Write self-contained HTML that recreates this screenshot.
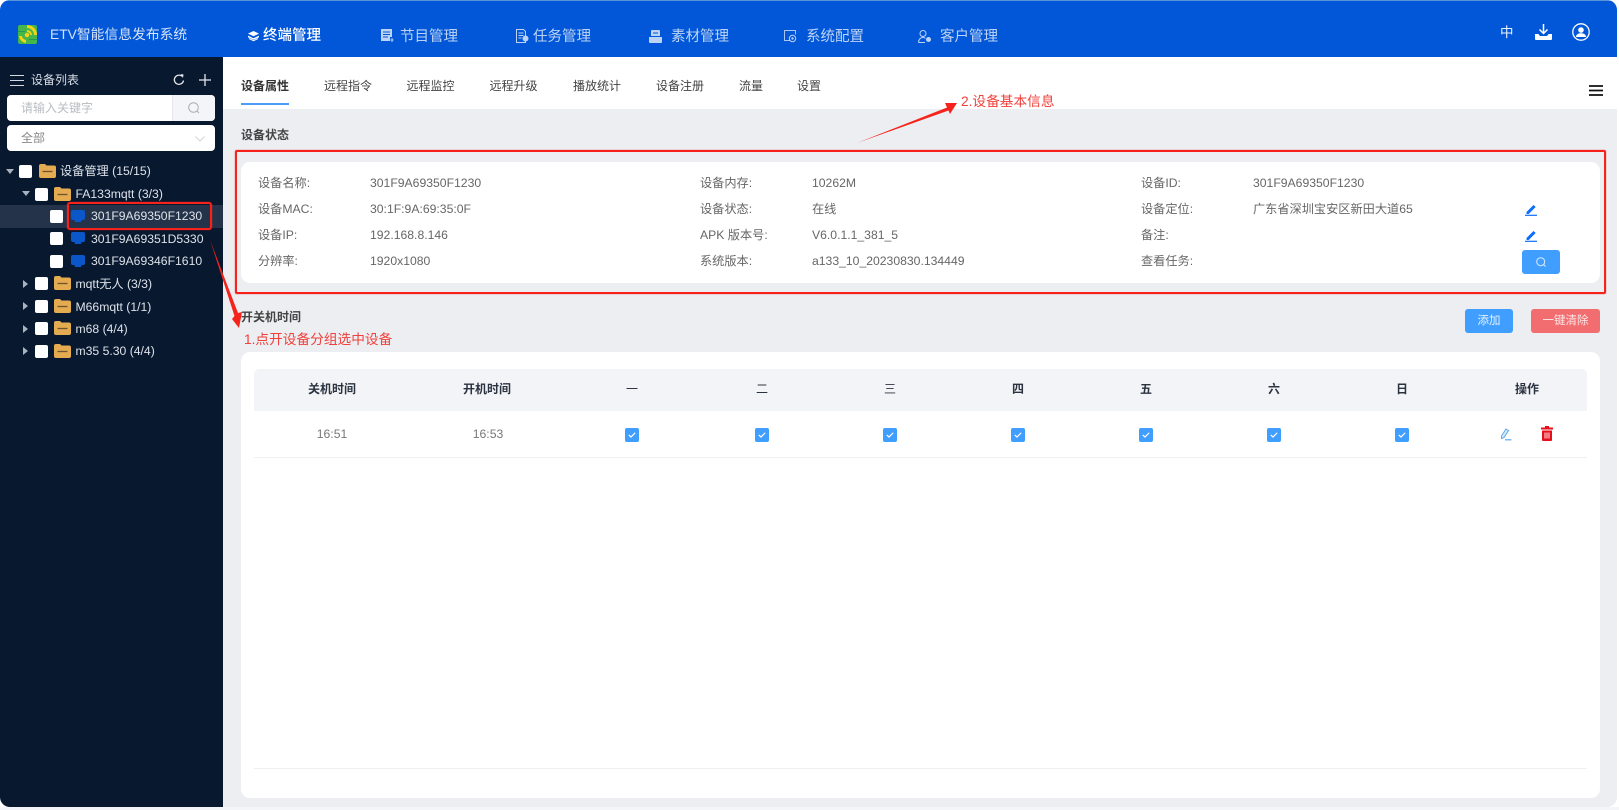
<!DOCTYPE html>
<html lang="zh-CN"><head><meta charset="utf-8"><title>ETV智能信息发布系统</title>
<style>
*{box-sizing:border-box}
html,body{margin:0;padding:0;width:1619px;height:810px;overflow:hidden;background:#fff}
body{position:relative;font-family:"Liberation Sans","Noto Sans CJK SC",sans-serif;font-size:12px;color:#666;filter:blur(.3px)}
.a{position:absolute}
.t{position:absolute;white-space:nowrap;height:20px;line-height:20px}
.n{font-size:14.5px;color:#bcd3f5;top:27px}
.tab{font-size:12px;color:#444;top:76px}
.l{font-size:12.2px;color:#666}
.tree{font-size:12.2px;color:#dde2ea}
.cb{position:absolute;width:13px;height:13px;background:#fff;border-radius:2px}
.th{font-size:12px;font-weight:bold;color:#2b3240;top:379px;transform:translateX(-50%)}
.ck{position:absolute;top:428px;width:14px;height:14px;background:#409eff;border-radius:2px}
svg{position:absolute;overflow:visible}
</style></head><body>

<!-- frame -->
<div class="a" style="left:0;top:0;width:1617px;height:807px;background:#eceef2;border-radius:10px;overflow:hidden">
<div class="a" style="left:0;top:0;width:1617px;height:57px;background:#0257d9;border-top:1px solid #5b93d8"></div>
<div class="a" style="left:0;top:57px;width:223px;height:750px;background:#08182f"></div>
<div class="a" style="left:223px;top:57px;width:1394px;height:52px;background:#fff"></div>
</div>
<div class="a" style="left:0;top:807px;width:1619px;height:3px;background:#f4f5f8"></div>

<!-- logo -->
<svg style="left:18px;top:25px" width="19" height="19" viewBox="0 0 19 19">
<rect x="0" y="0" width="19" height="19" rx="2" fill="#45b649"/>
<path d="M0 6.500h7M0 12.500h5M11 14.500h8" stroke="#1f8f5a" stroke-width=".8"/>
<path d="M9 0a10 10 0 0 1 10 10h-3a7 7 0 0 0-7-7z" fill="#f3d21c"/>
<path d="M9 5a5 5 0 0 1 5 5h-2a3 3 0 0 0-3-3z" fill="#f3d21c"/>
<path d="M1 11a8 8 0 0 0 7 7v-3a5 5 0 0 1-4-4z" fill="#f3d21c"/>
<circle cx="9" cy="10" r="2.200" fill="#f3d21c"/>
</svg>
<div class="t" style="left:50px;top:25px;font-size:13.8px;color:#d5e3f8">ETV智能信息发布系统</div>

<!-- nav -->
<svg style="left:248px;top:31px" width="11" height="10" viewBox="0 0 11 10"><path d="M5.500 0L11 2.600 5.500 5.200 0 2.600z" fill="#fff"/><path d="M0 4.600l5.500 2.600L11 4.600v1.600L5.500 8.800 0 6.200z" fill="#fff"/><path d="M1 7.600l4.500 2.100L10 7.600" stroke="#fff" fill="none"/></svg>
<div class="t n" style="left:263px;top:26px;color:#fff;font-weight:500">终端管理</div>

<svg style="left:381px;top:29px" width="13" height="13" viewBox="0 0 13 13"><path d="M0 0h11v8h-2v4H0z" fill="#bcd3f5"/><path d="M2 3h7M2 5.500h7M2 8h5" stroke="#0257d9" stroke-width=".9"/><path d="M11 9v4M9.500 11h3" stroke="#bcd3f5"/></svg>
<div class="t n" style="left:400px">节目管理</div>

<svg style="left:516px;top:29px" width="13" height="15" viewBox="0 0 13 15"><path d="M.5.500h7l2 2v11h-9z" fill="none" stroke="#bcd3f5"/><path d="M2.500 4h5M2.500 6.500h5M2.500 9h3" stroke="#bcd3f5"/><circle cx="9.500" cy="9.500" r="3" fill="#bcd3f5"/></svg>
<div class="t n" style="left:533px">任务管理</div>

<svg style="left:649px;top:30px" width="13" height="13" viewBox="0 0 13 13"><path d="M3 0h7a1 1 0 0 1 1 1v5H2V1a1 1 0 0 1 1-1z" fill="#bcd3f5"/><path d="M4 3h5" stroke="#0257d9"/><path d="M0 7h13v5a1 1 0 0 1-1 1H1a1 1 0 0 1-1-1z" fill="#bcd3f5"/></svg>
<div class="t n" style="left:671px">素材管理</div>

<svg style="left:784px;top:30px" width="13" height="13" viewBox="0 0 13 13"><path d="M6 10.500H.5V.5h11v4" fill="none" stroke="#a9c6f2"/><circle cx="8.500" cy="8.500" r="3.200" fill="none" stroke="#bcd3f5"/><circle cx="8.500" cy="8.500" r="1.200" fill="#bcd3f5"/></svg>
<div class="t n" style="left:806px">系统配置</div>

<svg style="left:918px;top:30px" width="14" height="13" viewBox="0 0 14 13"><circle cx="5" cy="3.500" r="3" fill="none" stroke="#bcd3f5"/><path d="M.5 12.500c0-3 2-5 4.500-5 1 0 1.800.3 2.500.8M.5 12.500H7" fill="none" stroke="#bcd3f5"/><circle cx="10.500" cy="9.500" r="2.500" fill="#bcd3f5"/></svg>
<div class="t n" style="left:940px">客户管理</div>

<!-- top right -->
<div class="t" style="left:1500px;top:23px;font-size:13.5px;color:#eaf2ff">中</div>
<svg style="left:1535px;top:24px" width="17" height="16" viewBox="0 0 17 16"><path d="M8.500 0v9M4.500 5.500l4 4 4-4" fill="none" stroke="#fff" stroke-width="1.500"/><path d="M0 10h3.500l1.500 2h7l1.500-2H17v5a1 1 0 0 1-1 1H1a1 1 0 0 1-1-1z" fill="#fff"/></svg>
<svg style="left:1572px;top:23px" width="18" height="18" viewBox="0 0 18 18"><circle cx="9" cy="9" r="8.200" fill="none" stroke="#fff" stroke-width="1.300"/><circle cx="9" cy="7" r="2.800" fill="#fff"/><path d="M4 14c0-2.500 2-3.800 5-3.800s5 1.300 5 3.800z" fill="#fff"/></svg>

<!-- sidebar head -->
<svg style="left:10px;top:75px" width="14" height="11" viewBox="0 0 14 11"><path d="M0 .5h14M0 5.500h14M0 10.500h14" stroke="#d5dae2" stroke-width="1"/></svg>
<div class="t" style="left:31px;top:70px;font-size:12px;color:#d8dde5">设备列表</div>
<svg style="left:173px;top:74px" width="12" height="12" viewBox="0 0 12 12"><path d="M10.500 6.500A4.600 4.600 0 1 1 9 2.300" fill="none" stroke="#e3e7ec" stroke-width="1.300"/><path d="M7.500 0l3 .5-.5 3.500z" fill="#e3e7ec"/></svg>
<svg style="left:199px;top:74px" width="12" height="12" viewBox="0 0 12 12"><path d="M6 0v12M0 6h12" stroke="#e3e7ec" stroke-width="1.300"/></svg>

<div class="a" style="left:7px;top:95px;width:208px;height:26px;background:#fff;border-radius:4px;overflow:hidden"><div class="a" style="left:165px;top:0;width:43px;height:26px;background:#f4f5f8;border-left:1px solid #e6e8ec"></div></div>
<div class="t" style="left:21px;top:98px;color:#b9bcc2;font-size:12px">请输入关键字</div>
<svg style="left:188px;top:102px" width="12" height="12" viewBox="0 0 12 12"><circle cx="5.500" cy="5.500" r="4.800" fill="none" stroke="#a8adb5"/><path d="M9 9l2 2" stroke="#a8adb5"/></svg>
<div class="a" style="left:7px;top:125px;width:208px;height:26px;background:#fff;border-radius:4px"></div>
<div class="t" style="left:21px;top:128px;color:#888;font-size:12px">全部</div>
<svg style="left:195px;top:136px" width="10" height="6" viewBox="0 0 10 6"><path d="M.5.500l4.500 4.500 4.500-4.500" fill="none" stroke="#d0d3d8"/></svg>

<!-- tree -->
<div class="a" style="left:0;top:205px;width:223px;height:23px;background:#25334a"></div>

<svg style="left:6px;top:169px" width="8" height="5"><path d="M0 0h8L4 5z" fill="#aab2bf"/></svg>
<div class="cb" style="left:19px;top:165px"></div>
<svg style="left:39px;top:164px" width="17" height="14" viewBox="0 0 17 14"><path d="M2 0h4l1.500 1.500H15a2 2 0 0 1 2 2V12a2 2 0 0 1-2 2H2a2 2 0 0 1-2-2V2a2 2 0 0 1 2-2z" fill="#e5ab50"/><path d="M3.500 7.500h10" stroke="#6d5530" stroke-width="1.300"/></svg>
<div class="t tree" style="left:60px;top:161px">设备管理 (15/15)</div>

<svg style="left:22px;top:191px" width="8" height="5"><path d="M0 0h8L4 5z" fill="#aab2bf"/></svg>
<div class="cb" style="left:35px;top:188px"></div>
<svg style="left:54px;top:187px" width="17" height="14" viewBox="0 0 17 14"><path d="M2 0h4l1.500 1.500H15a2 2 0 0 1 2 2V12a2 2 0 0 1-2 2H2a2 2 0 0 1-2-2V2a2 2 0 0 1 2-2z" fill="#e5ab50"/><path d="M3.500 7.500h10" stroke="#6d5530" stroke-width="1.300"/></svg>
<div class="t tree" style="left:75.500px;top:184px">FA133mqtt (3/3)</div>

<div class="cb" style="left:50px;top:210px"></div>
<svg style="left:71px;top:210px" width="14" height="13" viewBox="0 0 14 13"><path d="M2 0h10a2 2 0 0 1 2 2v6a2 2 0 0 1-2 2h-1.500L10 12H4l-.5-2H2a2 2 0 0 1-2-2V2a2 2 0 0 1 2-2z" fill="#0b56c8"/></svg>
<div class="t tree" style="left:91px;top:206px">301F9A69350F1230</div>

<div class="cb" style="left:50px;top:232px"></div>
<svg style="left:71px;top:232px" width="14" height="13" viewBox="0 0 14 13"><path d="M2 0h10a2 2 0 0 1 2 2v6a2 2 0 0 1-2 2h-1.500L10 12H4l-.5-2H2a2 2 0 0 1-2-2V2a2 2 0 0 1 2-2z" fill="#0b56c8"/></svg>
<div class="t tree" style="left:91px;top:228.500px">301F9A69351D5330</div>

<div class="cb" style="left:50px;top:255px"></div>
<svg style="left:71px;top:255px" width="14" height="13" viewBox="0 0 14 13"><path d="M2 0h10a2 2 0 0 1 2 2v6a2 2 0 0 1-2 2h-1.500L10 12H4l-.5-2H2a2 2 0 0 1-2-2V2a2 2 0 0 1 2-2z" fill="#0b56c8"/></svg>
<div class="t tree" style="left:91px;top:251px">301F9A69346F1610</div>

<svg style="left:23px;top:280px" width="5" height="8"><path d="M0 0v8l5-4z" fill="#aab2bf"/></svg>
<div class="cb" style="left:35px;top:277px"></div>
<svg style="left:54px;top:276px" width="17" height="14" viewBox="0 0 17 14"><path d="M2 0h4l1.500 1.500H15a2 2 0 0 1 2 2V12a2 2 0 0 1-2 2H2a2 2 0 0 1-2-2V2a2 2 0 0 1 2-2z" fill="#e5ab50"/><path d="M3.500 7.500h10" stroke="#6d5530" stroke-width="1.300"/></svg>
<div class="t tree" style="left:75.500px;top:274px">mqtt无人 (3/3)</div>

<svg style="left:23px;top:302px" width="5" height="8"><path d="M0 0v8l5-4z" fill="#aab2bf"/></svg>
<div class="cb" style="left:35px;top:300px"></div>
<svg style="left:54px;top:299px" width="17" height="14" viewBox="0 0 17 14"><path d="M2 0h4l1.500 1.500H15a2 2 0 0 1 2 2V12a2 2 0 0 1-2 2H2a2 2 0 0 1-2-2V2a2 2 0 0 1 2-2z" fill="#e5ab50"/><path d="M3.500 7.500h10" stroke="#6d5530" stroke-width="1.300"/></svg>
<div class="t tree" style="left:75.500px;top:296.500px">M66mqtt (1/1)</div>

<svg style="left:23px;top:325px" width="5" height="8"><path d="M0 0v8l5-4z" fill="#aab2bf"/></svg>
<div class="cb" style="left:35px;top:322px"></div>
<svg style="left:54px;top:321px" width="17" height="14" viewBox="0 0 17 14"><path d="M2 0h4l1.500 1.500H15a2 2 0 0 1 2 2V12a2 2 0 0 1-2 2H2a2 2 0 0 1-2-2V2a2 2 0 0 1 2-2z" fill="#e5ab50"/><path d="M3.500 7.500h10" stroke="#6d5530" stroke-width="1.300"/></svg>
<div class="t tree" style="left:75.500px;top:319px">m68 (4/4)</div>

<svg style="left:23px;top:347px" width="5" height="8"><path d="M0 0v8l5-4z" fill="#aab2bf"/></svg>
<div class="cb" style="left:35px;top:345px"></div>
<svg style="left:54px;top:344px" width="17" height="14" viewBox="0 0 17 14"><path d="M2 0h4l1.500 1.500H15a2 2 0 0 1 2 2V12a2 2 0 0 1-2 2H2a2 2 0 0 1-2-2V2a2 2 0 0 1 2-2z" fill="#e5ab50"/><path d="M3.500 7.500h10" stroke="#6d5530" stroke-width="1.300"/></svg>
<div class="t tree" style="left:75.500px;top:341px">m35 5.30 (4/4)</div>

<!-- tabs -->
<div class="t tab" style="left:241px;font-weight:bold;color:#333">设备属性</div>
<div class="a" style="left:241px;top:103px;width:48px;height:2px;background:#4a9df8"></div>
<div class="t tab" style="left:324px">远程指令</div>
<div class="t tab" style="left:406.500px">远程监控</div>
<div class="t tab" style="left:489.500px">远程升级</div>
<div class="t tab" style="left:573px">播放统计</div>
<div class="t tab" style="left:656px">设备注册</div>
<div class="t tab" style="left:739px">流量</div>
<div class="t tab" style="left:797px">设置</div>
<svg style="left:1589px;top:85px" width="14" height="11" viewBox="0 0 14 11"><path d="M0 1h14M0 5.500h14M0 10h14" stroke="#111" stroke-width="1.700"/></svg>

<!-- device info -->
<div class="t" style="left:241px;top:125px;font-weight:bold;color:#444">设备状态</div>
<div class="a" style="left:241px;top:162px;width:1359px;height:121px;background:#fff;border-radius:9px"></div>
<div class="a" style="left:235px;top:150px;width:1371px;height:144px;border:2px solid #f5231c;border-radius:2px;box-shadow:0 0 1px #f5231c"></div>

<div class="t l" style="left:258px;top:173px">设备名称:</div><div class="t l" style="left:370px;top:173px">301F9A69350F1230</div>
<div class="t l" style="left:258px;top:199px">设备MAC:</div><div class="t l" style="left:370px;top:199px">30:1F:9A:69:35:0F</div>
<div class="t l" style="left:258px;top:225px">设备IP:</div><div class="t l" style="left:370px;top:225px">192.168.8.146</div>
<div class="t l" style="left:258px;top:251px">分辨率:</div><div class="t l" style="left:370px;top:251px">1920x1080</div>

<div class="t l" style="left:700px;top:173px">设备内存:</div><div class="t l" style="left:812px;top:173px">10262M</div>
<div class="t l" style="left:700px;top:199px">设备状态:</div><div class="t l" style="left:812px;top:199px">在线</div>
<div class="t l" style="left:700px;top:225px">APK 版本号:</div><div class="t l" style="left:812px;top:225px">V6.0.1.1_381_5</div>
<div class="t l" style="left:700px;top:251px">系统版本:</div><div class="t l" style="left:812px;top:251px">a133_10_20230830.134449</div>

<div class="t l" style="left:1141px;top:173px">设备ID:</div><div class="t l" style="left:1253px;top:173px">301F9A69350F1230</div>
<div class="t l" style="left:1141px;top:199px">设备定位:</div><div class="t l" style="left:1253px;top:199px">广东省深圳宝安区新田大道65</div>
<div class="t l" style="left:1141px;top:225px">备注:</div>
<div class="t l" style="left:1141px;top:251px">查看任务:</div>

<svg style="left:1525px;top:204px" width="12" height="12" viewBox="0 0 12 12"><path d="M1.500 8L8.500 1l2.200 2-7 7H1.500z" fill="#0d6efd"/><path d="M0 11.300h12" stroke="#0d6efd" stroke-width="1.200"/></svg>
<svg style="left:1525px;top:230px" width="12" height="12" viewBox="0 0 12 12"><path d="M1.500 8L8.500 1l2.200 2-7 7H1.500z" fill="#0d6efd"/><path d="M0 11.300h12" stroke="#0d6efd" stroke-width="1.200"/></svg>
<div class="a" style="left:1522px;top:250px;width:38px;height:24px;background:#409eff;border-radius:3px"></div>
<svg style="left:1536px;top:257px" width="10" height="10" viewBox="0 0 10 10"><circle cx="4.700" cy="4.700" r="4" fill="none" stroke="#d9ecff"/><path d="M7.500 7.500L9.500 9.500" stroke="#d9ecff"/></svg>

<!-- schedule -->
<div class="t" style="left:241px;top:307px;font-weight:bold;color:#444">开关机时间</div>
<div class="a" style="left:1465px;top:309px;width:48px;height:24px;background:#409eff;border-radius:3px;color:#e6f2ff;font-size:11.5px;line-height:24px;text-align:center">添加</div>
<div class="a" style="left:1531px;top:309px;width:69px;height:24px;background:#f26d70;border-radius:3px;color:#fde6e6;font-size:11.5px;line-height:24px;text-align:center">一键清除</div>

<div class="a" style="left:241px;top:352px;width:1359px;height:446px;background:#fff;border-radius:9px"></div>
<div class="a" style="left:254px;top:369px;width:1333px;height:42px;background:#f3f4f7;border-radius:5px 5px 0 0"></div>
<div class="a" style="left:254px;top:457px;width:1333px;height:1px;background:#eff0f3"></div>
<div class="a" style="left:254px;top:768px;width:1333px;height:1px;background:#eff0f3"></div>

<div class="t th" style="left:332px">关机时间</div>
<div class="t th" style="left:487px">开机时间</div>
<div class="t th" style="left:632px;font-weight:normal">一</div>
<div class="t th" style="left:762px;font-weight:normal">二</div>
<div class="t th" style="left:890px;font-weight:normal">三</div>
<div class="t th" style="left:1018px">四</div>
<div class="t th" style="left:1146px">五</div>
<div class="t th" style="left:1274px">六</div>
<div class="t th" style="left:1402px">日</div>
<div class="t th" style="left:1527px">操作</div>

<div class="t l" style="left:332px;top:424px;transform:translateX(-50%);color:#777">16:51</div>
<div class="t l" style="left:488px;top:424px;transform:translateX(-50%);color:#777">16:53</div>

<div class="ck" style="left:625px"><svg style="left:3px;top:4px" width="8" height="6" viewBox="0 0 8 6"><path d="M.8 3l2.200 2L7.200.8" fill="none" stroke="#fff" stroke-width="1.200"/></svg></div>
<div class="ck" style="left:755px"><svg style="left:3px;top:4px" width="8" height="6" viewBox="0 0 8 6"><path d="M.8 3l2.200 2L7.200.8" fill="none" stroke="#fff" stroke-width="1.200"/></svg></div>
<div class="ck" style="left:883px"><svg style="left:3px;top:4px" width="8" height="6" viewBox="0 0 8 6"><path d="M.8 3l2.200 2L7.200.8" fill="none" stroke="#fff" stroke-width="1.200"/></svg></div>
<div class="ck" style="left:1011px"><svg style="left:3px;top:4px" width="8" height="6" viewBox="0 0 8 6"><path d="M.8 3l2.200 2L7.200.8" fill="none" stroke="#fff" stroke-width="1.200"/></svg></div>
<div class="ck" style="left:1139px"><svg style="left:3px;top:4px" width="8" height="6" viewBox="0 0 8 6"><path d="M.8 3l2.200 2L7.200.8" fill="none" stroke="#fff" stroke-width="1.200"/></svg></div>
<div class="ck" style="left:1267px"><svg style="left:3px;top:4px" width="8" height="6" viewBox="0 0 8 6"><path d="M.8 3l2.200 2L7.200.8" fill="none" stroke="#fff" stroke-width="1.200"/></svg></div>
<div class="ck" style="left:1395px"><svg style="left:3px;top:4px" width="8" height="6" viewBox="0 0 8 6"><path d="M.8 3l2.200 2L7.200.8" fill="none" stroke="#fff" stroke-width="1.200"/></svg></div>

<svg style="left:1500px;top:428px" width="12" height="13" viewBox="0 0 12 13"><path d="M1.500 8L6 1l2.500 1.500L4 9.500l-2.500 1z" fill="#d8ebfd" stroke="#5aa9ee"/><path d="M5 11.800h6.500" stroke="#5aa9ee" stroke-width="1.200"/></svg>
<svg style="left:1541px;top:426px" width="12" height="15" viewBox="0 0 12 15"><path d="M4 0h4v1.500h4V3.500H0V1.500h4z" fill="#e60f1e"/><path d="M1 4.500h10V14a1 1 0 0 1-1 1H2a1 1 0 0 1-1-1z" fill="#e60f1e"/><path d="M4 6.500v6M6 6.500v6M8 6.500v6" stroke="#fff" stroke-width=".9"/></svg>

<!-- red selection box -->
<div class="a" style="left:67px;top:202px;width:145px;height:28px;border:2px solid #f5231c;border-radius:3px;box-shadow:0 0 1px #f5231c"></div>

<!-- annotations -->
<svg style="left:0;top:0" width="1619" height="810" viewBox="0 0 1619 810">
<path d="M210 240L238 313L242 312L239 328L232 319L234.500 316Z" fill="#f5231c"/>
<path d="M857 143L947 107.500L945 103L957 103L950 114L948.500 110.500Z" fill="#f5231c"/>
</svg>
<div class="t" style="left:244px;top:330px;font-size:13.7px;color:#f0403b">1.点开设备分组选中设备</div>
<div class="t" style="left:961px;top:92px;font-size:13.7px;color:#f0403b">2.设备基本信息</div>

</body></html>
